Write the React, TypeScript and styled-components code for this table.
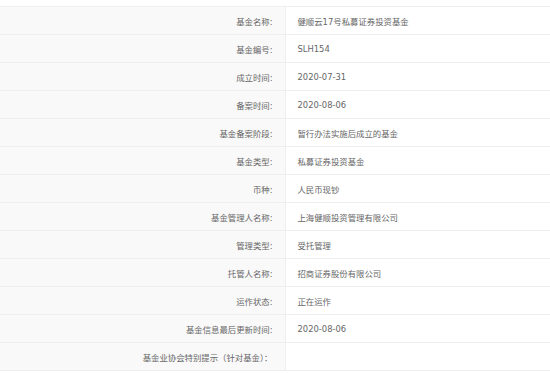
import React from "react";
import styled, { createGlobalStyle } from "styled-components";

const GlobalStyle = createGlobalStyle`
  html, body {
    margin: 0;
    padding: 0;
    background: #ffffff;
  }
  body {
    font-family: "DejaVu Sans", "Noto Sans CJK SC", sans-serif;
  }
`;

const Wrapper = styled.div`
  padding-top: 6px;
  width: 550px;
`;

const Table = styled.table`
  width: 100%;
  border-collapse: collapse;
  font-size: 8.4px;
  color: #666;
`;

const Row = styled.tr`
  height: 28px;
  border-top: 1px solid #eeeeee;
  border-bottom: 1px solid #eeeeee;
`;

const Th = styled.td`
  width: 285px;
  box-sizing: border-box;
  background-color: #f9f9f9;
  text-align: right;
  padding: 0 12px 0 0;
  border-right: 1px solid #eeeeee;
  white-space: nowrap;
`;

const Td = styled.td`
  padding: 0 0 0 12px;
  background-color: #ffffff;
  white-space: nowrap;
`;

const rows: [string, string][] = [
  ["基金名称:", "健顺云17号私募证券投资基金"],
  ["基金编号:", "SLH154"],
  ["成立时间:", "2020-07-31"],
  ["备案时间:", "2020-08-06"],
  ["基金备案阶段:", "暂行办法实施后成立的基金"],
  ["基金类型:", "私募证券投资基金"],
  ["币种:", "人民币现钞"],
  ["基金管理人名称:", "上海健顺投资管理有限公司"],
  ["管理类型:", "受托管理"],
  ["托管人名称:", "招商证券股份有限公司"],
  ["运作状态:", "正在运作"],
  ["基金信息最后更新时间:", "2020-08-06"],
  ["基金业协会特别提示（针对基金）：", ""],
];

const App: React.FC = () => {
  return (
    <Wrapper>
      <GlobalStyle />
      <Table>
        <tbody>
          {rows.map(([label, value]) => (
            <Row key={label}>
              <Th>{label}</Th>
              <Td>{value}</Td>
            </Row>
          ))}
        </tbody>
      </Table>
    </Wrapper>
  );
};

export default App;
